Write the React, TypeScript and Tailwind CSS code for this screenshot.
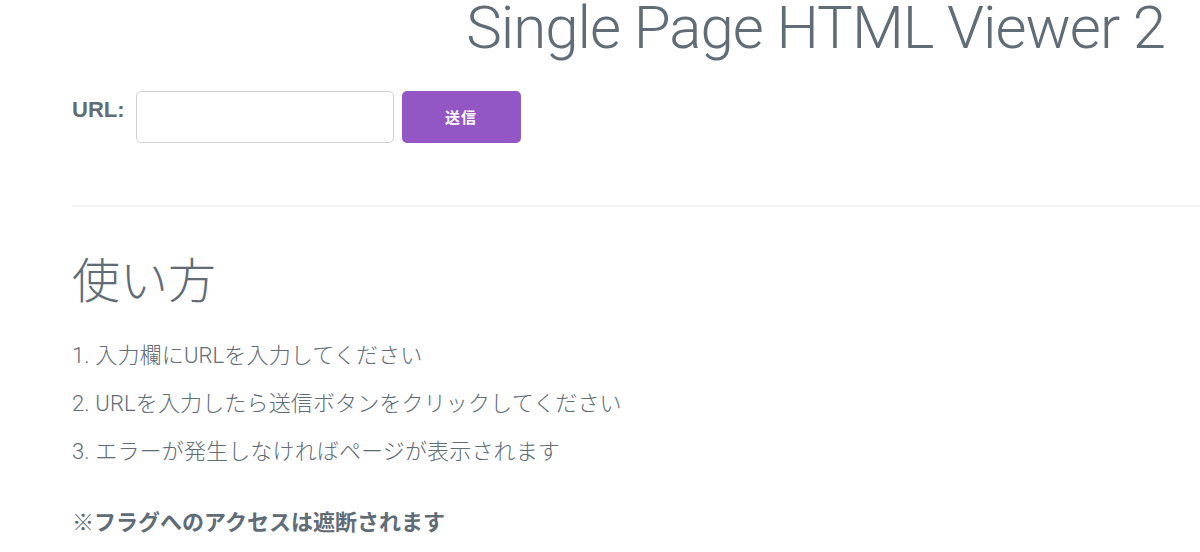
import React from "react";

const latin = "font-['Roboto','Noto_Sans_CJK_JP',sans-serif]";

export default function App() {
  return (
    <div className={`min-h-screen w-full overflow-hidden bg-white text-[#606c76] ${latin}`}>
      <header className="flex justify-end pr-[35px]">
        <h1 className="text-[60px] font-light leading-[56px] tracking-[-1px]">Single Page HTML Viewer 2</h1>
      </header>
      <div className="pl-[72px]">
        <form className="mt-[35px] flex items-start" onSubmit={(e) => e.preventDefault()}>
          <label className="mt-[4px] text-[22px] font-bold leading-[30px] font-['Liberation_Sans','Noto_Sans_CJK_JP',sans-serif]">URL:</label>
          <input
            type="text"
            className="ml-[11px] h-[52px] w-[258px] rounded-[5px] border border-[#d1d1d1] bg-transparent px-[14px] text-[20px] outline-none"
          />
          <button
            type="submit"
            className="ml-[8px] flex h-[52px] w-[119px] items-center justify-center rounded-[5px] bg-[#9356c5] text-[15px] font-bold tracking-[1px] text-white font-['Noto_Sans_CJK_JP',sans-serif]"
          >
            送信
          </button>
        </form>
        <div className="mt-[62px] h-[2px] w-full bg-[#f4f5f6]" />
        <h2 className="mt-[40px] text-[48px] font-light leading-[60px] font-['Noto_Sans_CJK_JP',sans-serif]">使い方</h2>
        <ol className="mt-[33px] flex flex-col gap-[17px] text-[22px] font-light leading-[31px] tracking-[0.15px]">
          <li>1. 入力欄にURLを入力してください</li>
          <li>2. URLを入力したら送信ボタンをクリックしてください</li>
          <li>3. エラーが発生しなければページが表示されます</li>
        </ol>
        <p className="mt-[40px] text-[22px] font-bold leading-[31px]">※フラグへのアクセスは遮断されます</p>
      </div>
    </div>
  );
}
